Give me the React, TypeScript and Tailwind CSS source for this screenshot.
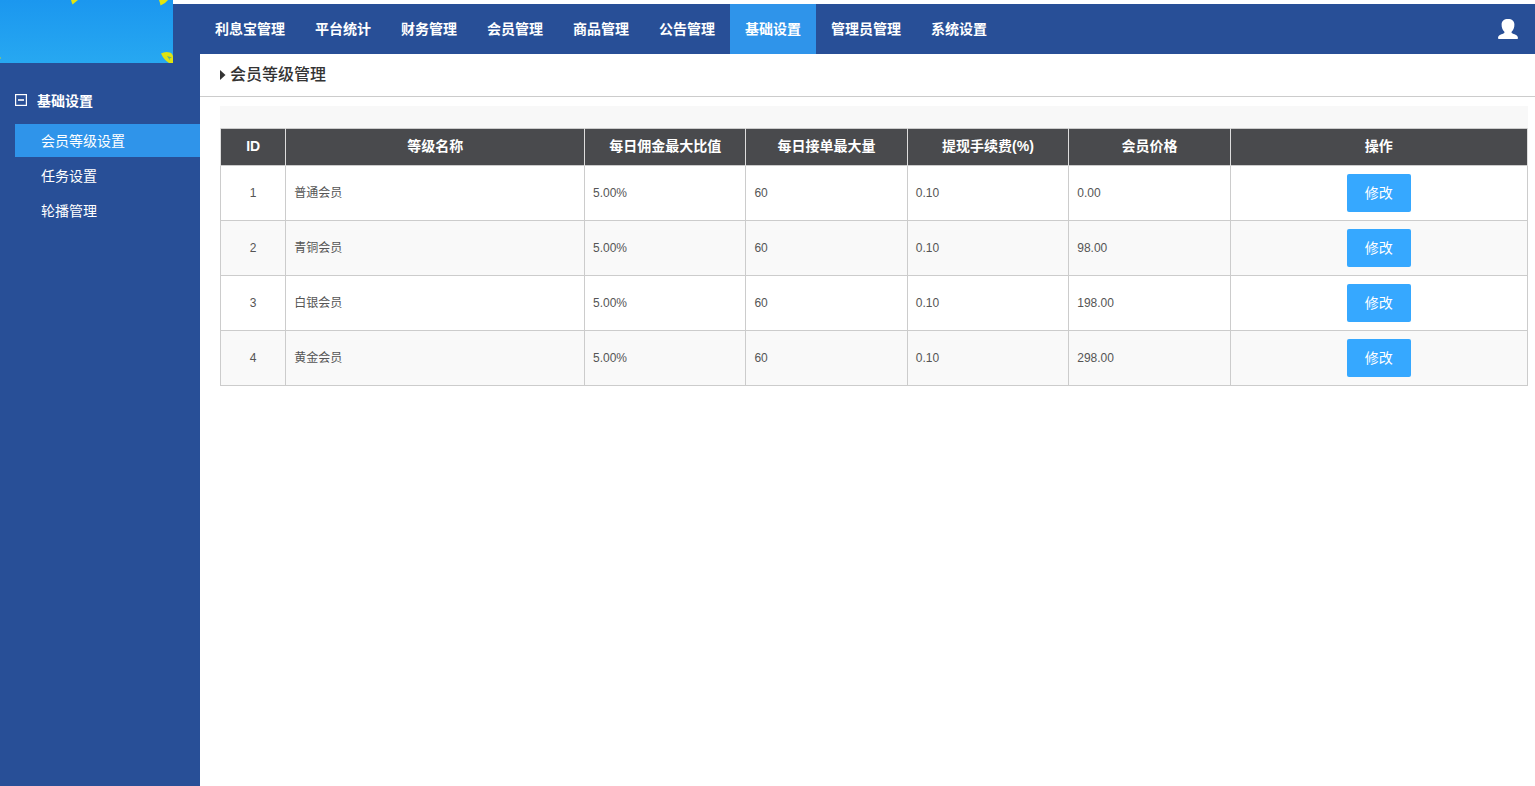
import React from 'react';

const navItems: string[] = [
  '利息宝管理',
  '平台统计',
  '财务管理',
  '会员管理',
  '商品管理',
  '公告管理',
  '基础设置',
  '管理员管理',
  '系统设置',
];

const menuItems: string[] = ['会员等级设置', '任务设置', '轮播管理'];

interface Level {
  id: number;
  name: string;
  rate: string;
  orders: string;
  fee: string;
  price: string;
}

const levels: Level[] = [
  { id: 1, name: '普通会员', rate: '5.00%', orders: '60', fee: '0.10', price: '0.00' },
  { id: 2, name: '青铜会员', rate: '5.00%', orders: '60', fee: '0.10', price: '98.00' },
  { id: 3, name: '白银会员', rate: '5.00%', orders: '60', fee: '0.10', price: '198.00' },
  { id: 4, name: '黄金会员', rate: '5.00%', orders: '60', fee: '0.10', price: '298.00' },
];

const headings: string[] = ['ID', '等级名称', '每日佣金最大比值', '每日接单最大量', '提现手续费(%)', '会员价格', '操作'];

function Logo() {
  return (
    <svg width="173" height="63" viewBox="0 0 173 63" className="block shrink-0" aria-hidden="true">
      <defs>
        <linearGradient id="sky" x1="0" y1="0" x2="0" y2="1">
          <stop offset="0" stopColor="#1b97ef" />
          <stop offset="1" stopColor="#27a8f1" />
        </linearGradient>
      </defs>
      <rect width="173" height="63" fill="url(#sky)" />
      <path d="M71 0H78L72.5 4.500Q71.500 2 71 0Z" fill="#e3e50d" />
      <path d="M159 0H168Q165 4 160.500 5.500Q160 2.500 159 0Z" fill="#e3e50d" />
      <path d="M161 53.500Q165 51 170 52.500Q173 54 173 57V63H169Q164 60 161 53.500Z" fill="#dfe30f" />
      <path d="M167 56L172 57.500L169.500 58.500L170 60.500Z" fill="#5fb08a" />
      <path d="M0 57L1 58L0 59Z" fill="#b9d83a" />
    </svg>
  );
}

function Sidebar() {
  return (
    <aside className="w-[200px] shrink-0 bg-[#284f97] text-white">
      <div className="flex">
        <Logo />
        <div className="h-1 grow bg-white" />
      </div>
      <h2 className="mt-6 flex h-7 items-center gap-2.5 pl-[15px] text-[14px] leading-5 font-bold">
        <svg width="12" height="12" viewBox="0 0 12 12" aria-hidden="true" className="mb-0.5">
          <rect x="0.6" y="0.6" width="10.8" height="10.8" fill="none" stroke="#fff" strokeWidth="1.2" />
          <path d="M3 6H9" stroke="#fff" strokeWidth="1.6" />
        </svg>
        基础设置
      </h2>
      <ul className="mt-[9px] flex flex-col gap-0.5 pl-[15px]">
        {menuItems.map((item, i) => (
          <li key={item}>
            <a
              href="#"
              className={`flex h-[33px] items-center pl-[26px] text-[14px] leading-5 ${i === 0 ? 'bg-[#2f94ea]' : ''}`}
            >
              {item}
            </a>
          </li>
        ))}
      </ul>
    </aside>
  );
}

function TopBar() {
  return (
    <header className="mt-1 flex h-[50px] items-center justify-between bg-[#284f97] pr-4 text-white">
      <nav className="flex h-full">
        {navItems.map((item) => (
          <a
            key={item}
            href="#"
            className={`flex h-full items-center px-[15px] text-[14px] leading-5 font-bold whitespace-nowrap ${
              item === '基础设置' ? 'bg-[#2f94ea]' : ''
            }`}
          >
            {item}
          </a>
        ))}
      </nav>
      <button type="button" aria-label="账户">
        <svg width="22" height="22" viewBox="0 0 22 22" fill="#fff" aria-hidden="true" className="block">
          <path d="M11 1C15 1 17.400 3 17.400 6.500C17.400 9.500 16.500 12 14.800 13.600C14.400 14 14.400 14.900 15 15.300C16.500 16.200 21 16.600 21 20.200Q21 21 20 21H2Q1 21 1 20.200C1 16.600 5.500 16.200 7 15.300C7.600 14.900 7.600 14 7.200 13.600C5.500 12 4.600 9.500 4.600 6.500C4.600 3 7 1 11 1Z" />
        </svg>
      </button>
    </header>
  );
}

export default function App() {
  return (
    <div className="flex min-h-screen bg-white font-['Liberation_Sans','Noto_Sans_CJK_SC',sans-serif]">
      <Sidebar />
      <div className="min-w-0 grow">
        <TopBar />
        <main>
          <div className="flex h-[43px] items-center gap-1 border-b border-[#ccc] pl-5">
            <svg width="6" height="10" viewBox="0 0 6 10" aria-hidden="true">
              <path d="M0 0L5.500 5L0 10Z" fill="#333" />
            </svg>
            <h1 className="text-[16px] leading-6 font-medium text-[#333]">会员等级管理</h1>
          </div>
          <div className="mt-[9px] pr-[7px] pl-5">
            <div className="h-[22px] bg-[#f8f8f8]" />
            <table className="w-full table-fixed border-collapse border border-[#ccc] text-[12px] leading-4 text-[#555]">
              <colgroup>
                <col className="w-[5%]" />
                <col className="w-[22.85%]" />
                <col className="w-[12.35%]" />
                <col className="w-[12.35%]" />
                <col className="w-[12.35%]" />
                <col className="w-[12.35%]" />
                <col />
              </colgroup>
              <thead>
                <tr className="h-[37px] bg-[#494a4d] text-[14px] leading-5 text-white">
                  {headings.map((h) => (
                    <th key={h} scope="col" className="border-x border-[#ddd] pb-0.5 font-bold">
                      {h}
                    </th>
                  ))}
                </tr>
              </thead>
              <tbody>
                {levels.map((l) => (
                  <tr key={l.id} className="h-[55px] even:bg-[#f9f9f9]">
                    <td className="border border-[#ccc] px-2 text-center">{l.id}</td>
                    <td className="border border-[#ccc] px-2">{l.name}</td>
                    <td className="border border-[#ccc] px-2">{l.rate}</td>
                    <td className="border border-[#ccc] px-2">{l.orders}</td>
                    <td className="border border-[#ccc] px-2">{l.fee}</td>
                    <td className="border border-[#ccc] px-2">{l.price}</td>
                    <td className="border border-[#ccc] px-2">
                      <button
                        type="button"
                        className="mx-auto flex h-[38px] w-16 items-center justify-center rounded-xs bg-[#36a8ff] text-[14px] leading-5 text-white"
                      >
                        修改
                      </button>
                    </td>
                  </tr>
                ))}
              </tbody>
            </table>
          </div>
        </main>
      </div>
    </div>
  );
}
